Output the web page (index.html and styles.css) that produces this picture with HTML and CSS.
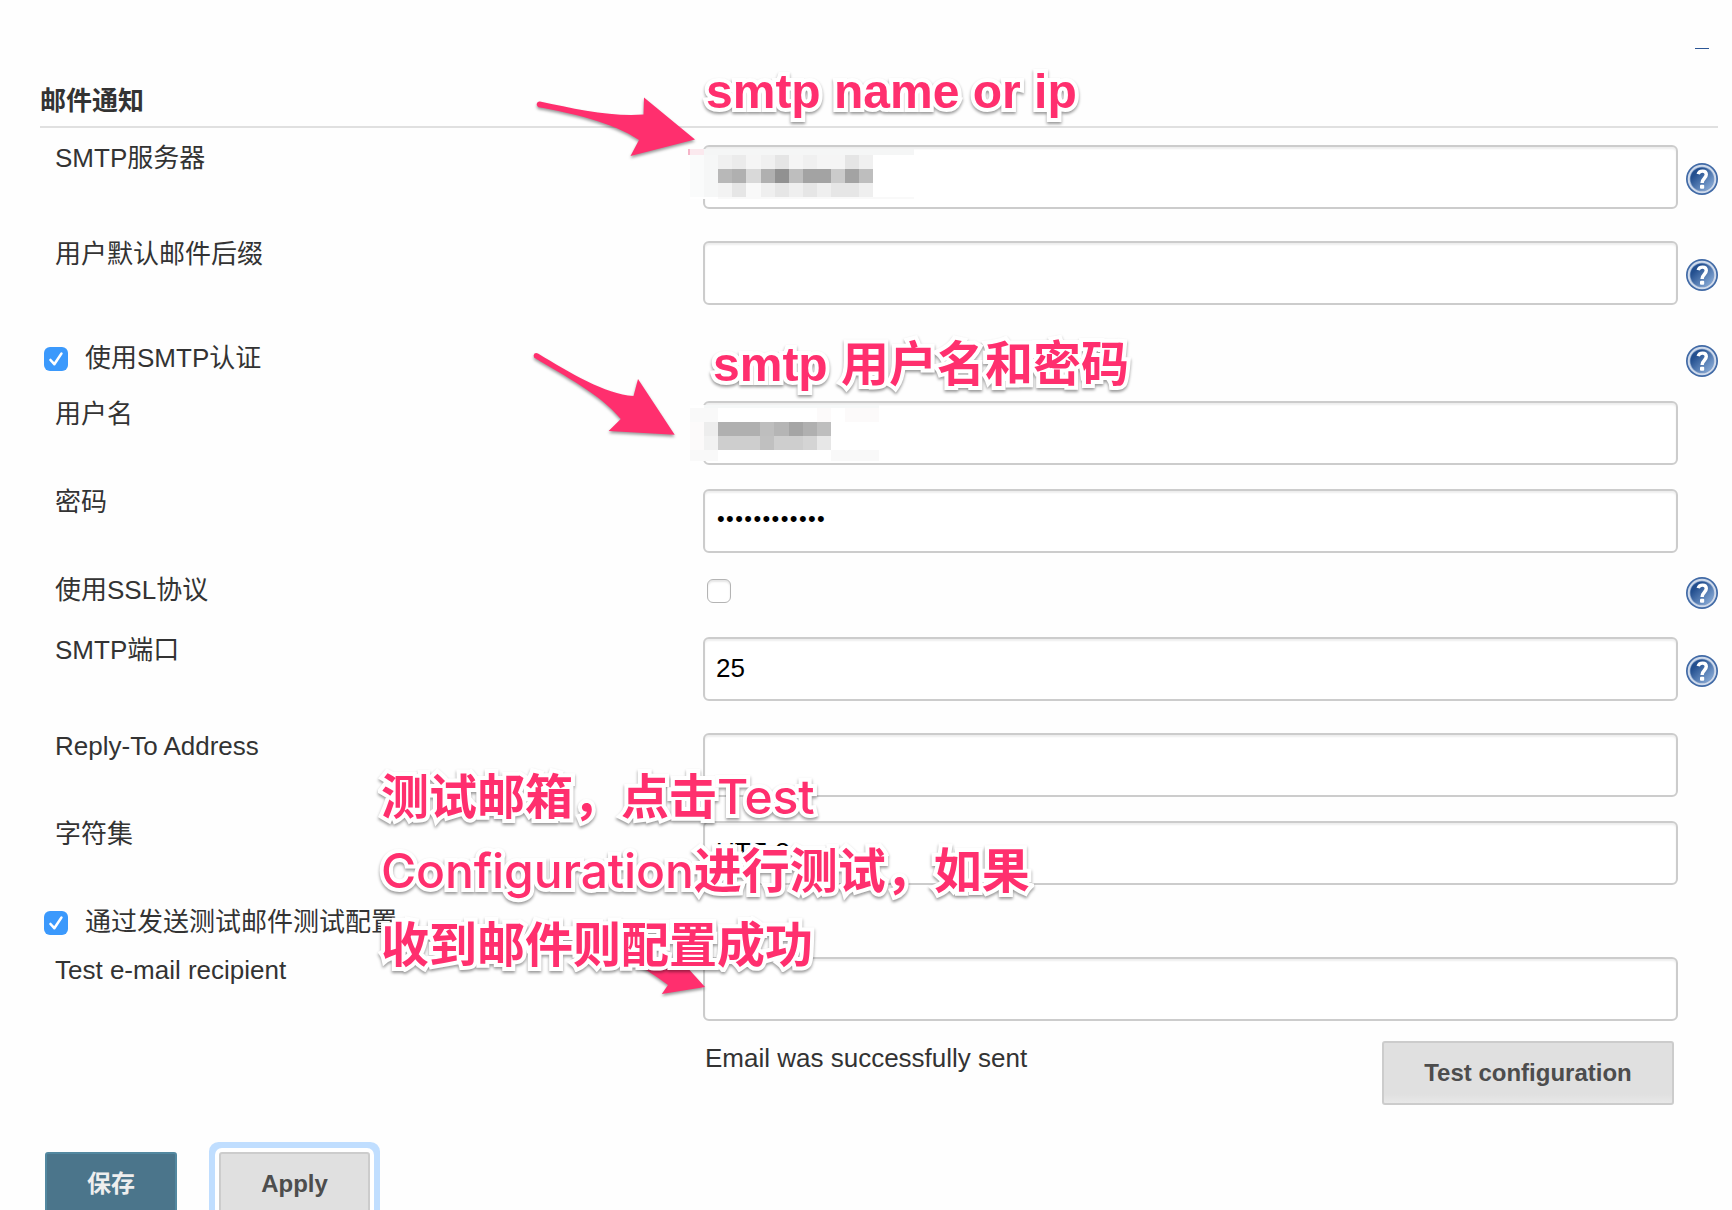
FILE: index.html
```html
<!DOCTYPE html>
<html lang="zh-CN">
<head>
<meta charset="utf-8">
<title>邮件通知</title>
<link rel="stylesheet" href="styles.css">
</head>
<body>
<svg class="defs" width="0" height="0">
  <defs>
    <linearGradient id="disc" x1="0" y1="0" x2="1" y2="1">
      <stop offset=".25" stop-color="#234f8f"/><stop offset=".9" stop-color="#86a9d6"/>
    </linearGradient>
    <symbol id="help" viewBox="0 0 32 32">
      <circle cx="16" cy="16" r="16" fill="#416aa6"/>
      <circle cx="16" cy="16" r="13.3" fill="#7f9cc6" stroke="#cfdaeb" stroke-width="2"/>
      <circle cx="16" cy="16" r="11.6" fill="url(#disc)"/>
      <path d="M12.2 11.2C13.2 7.2 20.3 7 20.3 11.6C20.3 15.2 16.2 15.3 16.1 20" fill="none" stroke="#fff" stroke-width="3.4"/>
      <rect x="14" y="21.7" width="4.2" height="4" rx="1" fill="#fff"/>
    </symbol>
    <symbol id="check" viewBox="0 0 24 24">
      <path d="M6.5 13L10.3 17.2L17.4 6.6" fill="none" stroke="#fff" stroke-width="2.6" stroke-linecap="round" stroke-linejoin="round"/>
    </symbol>
  </defs>
</svg>
<main class="page">
  <header class="section"><span class="sliver"></span><h1>邮件通知</h1></header>
  <div class="row h96"><label>SMTP服务器</label><div class="field"></div><svg class="help"><use href="#help"/></svg></div>
  <div class="row h104"><label>用户默认邮件后缀</label><div class="field"></div><svg class="help"><use href="#help"/></svg></div>
  <div class="row h56 check-row"><label class="toggle"><span class="box on"><svg><use href="#check"/></svg></span>使用SMTP认证</label><svg class="help flush"><use href="#help"/></svg></div>
  <div class="row h88"><label>用户名</label><div class="field"></div></div>
  <div class="row h88"><label>密码</label><div class="field dots">••••••••••••</div></div>
  <div class="row h60"><label>使用SSL协议</label><span class="box"></span><svg class="help flush"><use href="#help"/></svg></div>
  <div class="row h96"><label>SMTP端口</label><div class="field">25</div><svg class="help"><use href="#help"/></svg></div>
  <div class="row h88"><label>Reply-To Address</label><div class="field"></div></div>
  <div class="row h88"><label>字符集</label><div class="field">UTF-8</div></div>
  <div class="row h48 check-row"><label class="toggle"><span class="box on"><svg><use href="#check"/></svg></span>通过发送测试邮件测试配置</label></div>
  <div class="row h84"><label>Test e-mail recipient</label><div class="field"></div></div>
  <div class="result"><span class="message">Email was successfully sent</span><button class="btn test">Test configuration</button></div>
  <footer class="actions"><button class="btn save">保存</button><button class="btn apply">Apply</button></footer>
</main>

<svg class="overlay" viewBox="0 0 1732 1210" width="1732" height="1210">
  <g shape-rendering="crispEdges">
    <path fill="#fff" d="M690 149H914V199H690z"/>
    <path fill="#fbe9ee" d="M690 149h14v6h-14z"/><path fill="#f5b5c8" d="M688 149h2v6h-2z"/>
    <path fill="#f5f6f6" d="M704 149h210v6H704z"/>
    <path fill="#fafbfb" d="M690 155h14v42h-14z"/><path fill="#f6f7f7" d="M704 155h14v42h-14z"/>
    <path fill="#f0f0f0" d="M718 155h14v14h-14zM761 155h14v14h-14zM803 155h14v14h-14zM859 155h14v14h-14z"/>
    <path fill="#ebebeb" d="M732 155h14v14h-14z"/>
    <path fill="#e5e5e5" d="M775 155h14v14h-14zM845 155h14v14h-14z"/>
    <path fill="#f5f5f5" d="M746 155h15v14h-15zM789 155h14v14h-14zM817 155h28v14h-28z"/>
    <path fill="#b8b8b8" d="M718 169h14v14h-14z"/><path fill="#b0b0b0" d="M732 169h14v14h-14zM761 169h14v14h-14z"/>
    <path fill="#d9d9d9" d="M746 169h15v14h-15z"/><path fill="#919191" d="M775 169h14v14h-14z"/>
    <path fill="#bebebe" d="M789 169h14v14h-14zM859 169h14v14h-14z"/>
    <path fill="#a3a3a3" d="M803 169h28v14h-28zM845 169h14v14h-14z"/><path fill="#cbcbcb" d="M831 169h14v14h-14z"/>
    <path fill="#f3f3f3" d="M718 183h14v14h-14z"/><path fill="#e6e6e6" d="M732 183h14v14h-14zM775 183h14v14h-14zM803 183h14v14h-14zM831 183h28v14h-28z"/>
    <path fill="#f9f9f9" d="M746 183h15v14h-15zM718 197h196v2H718z"/><path fill="#efefef" d="M761 183h14v14h-14zM789 183h14v14h-14zM817 183h14v14h-14zM859 183h14v14h-14z"/>

    <path fill="#fff" d="M690 405H879V461H690z"/>
    <path fill="#f6f8f8" d="M704 405h175v3H704z"/>
    <path fill="#f9f9f9" d="M690 408h28v14h-28zM690 450h28v11h-28zM831 450h48v11h-48z"/>
    <path fill="#fcfafa" d="M690 422h14v28h-14zM817 408h14v14h-14zM845 408h34v14h-34z"/>
    <path fill="#ededed" d="M704 422h14v14h-14z"/><path fill="#f2f2f2" d="M704 436h14v14h-14z"/>
    <path fill="#b0b0b0" d="M718 422h42v14h-42zM803 422h14v14h-14z"/><path fill="#bebebe" d="M760 422h14v14h-14zM817 422h14v14h-14z"/>
    <path fill="#b5b5b5" d="M774 422h15v14h-15z"/><path fill="#a5a5a5" d="M789 422h14v14h-14z"/>
    <path fill="#cecece" d="M718 436h42v14h-42zM774 436h29v14h-29z"/><path fill="#c0c0c0" d="M760 436h14v14h-14z"/>
    <path fill="#d4d4d4" d="M803 436h14v14h-14z"/><path fill="#e7e7e7" d="M817 436h14v14h-14z"/>
  </g>
  <g class="arrows">
    <path d="M540 101.5C575 109 612 117 643.5 114.5L644 97.5L695 139.5L630.5 156L639 140C612 122 570 113 538.5 107.300Q536 105.500 537 103Q538 101 540 101.500Z"/>
    <path d="M538 353.500C570 373 605 394 633.500 396L638 379L674.700 434.700L608.600 431L620.800 419C600 394 566 377 534 357.500Q533 355 534.500 353.500Q536 352.500 538 353.500Z"/>
    <path d="M625 958L685 965L705 987L661.800 994L668 985C655 975 640 966 625 958Z"/>
  </g>
</svg>
<p class="note note-server">smtp name or ip</p>
<p class="note note-login">smtp 用户名和密码</p>
<p class="note note-test">测试邮箱，点击<span class="latin">Test</span><br><span class="latin">Configuration</span>进行测试，如果<br>收到邮件则配置成功</p>
</body>
</html>
```
FILE: styles.css
```css
* { box-sizing: border-box; }
html, body { height: 100%; overflow: hidden; }
body {
  margin: 0;
  background: #fefefe;
  color: #333;
  font-family: "Liberation Sans", "Noto Sans CJK SC", sans-serif;
  font-size: 26px;
  line-height: 30px;
}
.defs { position: absolute; }
.page { width: 1732px; padding: 0 14px 0 40px; }
.section {
  height: 128px;
  margin-bottom: 17px;
  border-bottom: 2px solid #e0e0e0;
  display: flex;
  flex-direction: column;
}
.sliver {
  align-self: flex-end;
  width: 14px;
  height: 1px;
  margin: 48px 9px 0 0;
  background: #2c5696;
}
h1 { margin: 37px 0 0; font-size: 26px; line-height: 30px; font-weight: 700; }

.row {
  display: grid;
  grid-template-columns: 663px 975px 32px;
  column-gap: 0;
  align-items: start;
}
.row label { padding-left: 15px; margin-top: -2px; white-space: nowrap; height: 30px; }
.row .toggle {
  grid-column: 1 / 3;
  display: flex;
  gap: 17px;
  padding-left: 4px;
  margin-top: -2px;
}
.h48 { height: 48px; }
.h56 { height: 56px; }
.h60 { height: 60px; }
.h84 { height: 84px; }
.h88 { height: 88px; }
.h96 { height: 96px; }
.h104 { height: 104px; }

.field {
  height: 64px;
  padding: 14px 11px;
  border: 2px solid #ccc;
  border-radius: 6px;
  background: #fff;
  box-shadow: inset 0 2px 2px rgba(0, 0, 0, .07);
  color: #000;
}
.dots { font-size: 22px; letter-spacing: 1.4px; padding: 13px 12px; }
.help { width: 32px; height: 32px; margin: 18px 0 0 8px; }
.help.flush { margin-top: 0; }
.box {
  width: 24px;
  height: 24px;
  margin: 2px 0 0 4px;
  border: 1px solid #b4b4b4;
  border-radius: 6px;
  background: #fff;
  box-shadow: inset 0 2px 2px rgba(0, 0, 0, .1);
}
.box.on { flex: none; margin: 4px 0 0; border: 0; background: #3b99fc; box-shadow: none; }
.box svg { display: block; width: 24px; height: 24px; }

.result { height: 111px; padding: 0 44px 0 665px; display: flex; justify-content: space-between; }
.message { padding-top: 2px; }
.btn {
  height: 64px;
  padding: 0;
  border: 2px solid #ccc;
  border-radius: 3px;
  background: #e0e0e0;
  color: #4d4d4d;
  font: 700 24px/30px "Liberation Sans", "Noto Sans CJK SC", sans-serif;
}
.test { width: 292px; background: linear-gradient(#e0e0e0 85%, #e8e8e8); }
.actions { display: flex; gap: 42px; padding-left: 5px; }
.save { width: 132px; border-color: #5388a0; background: #4b758b; color: #eee; }
.apply { width: 151px; box-shadow: 0 0 0 4px #fff, 0 0 0 10px #c0deff; }

.overlay { position: absolute; left: 0; top: 0; }
.arrows { fill: #ff2f6e; filter: drop-shadow(0 2px 1.5px rgba(0, 0, 0, .4)); }
.note {
  position: absolute;
  margin: 0;
  color: #ff2f6e;
  font-size: 48px;
  font-weight: 700;
  line-height: 74px;
  white-space: nowrap;
  -webkit-text-stroke: 8px #fff;
  paint-order: stroke fill;
  filter: drop-shadow(0 2px 1.5px rgba(0, 0, 0, .4));
}
.note-server { left: 706px; top: 55px; }
.note-login { left: 713px; top: 328px; }
.note-test { left: 381px; top: 761px; }
.latin { font-family: Inter, sans-serif; font-weight: 500; line-height: 1; letter-spacing: -.1px; }
```
